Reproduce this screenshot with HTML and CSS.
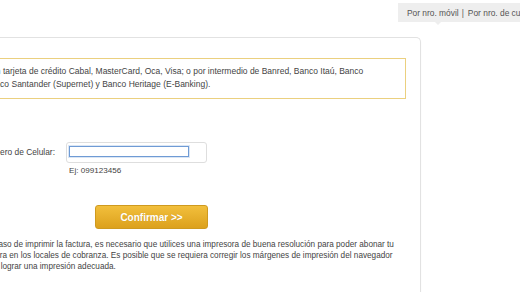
FILE: index.html
```html
<!DOCTYPE html>
<html lang="es">
<head>
<meta charset="utf-8">
<title>Pago de factura</title>
<link rel="stylesheet" href="styles.css">
</head>
<body>
<div class="page">
  <header class="topbar">
    <nav class="tabs">
      <a class="tab active" href="#">Por nro. móvil</a>
      <span class="sep">|</span>
      <a class="tab" href="#">Por nro. de cuenta</a>
    </nav>
  </header>
  <main class="card">
    <div class="notice">Con tarjeta de crédito Cabal, MasterCard, Oca, Visa; o por intermedio de Banred, Banco Itaú, Banco<br>Banco Santander (Supernet) y Banco Heritage (E-Banking).</div>
    <form class="form">
      <label class="label" for="cel">Número de Celular:</label>
      <div class="field">
        <div class="field-box"><input id="cel" class="input" type="text"></div>
        <div class="hint">Ej: 099123456</div>
      </div>
      <div class="actions"><button class="btn" type="button">Confirmar &gt;&gt;</button></div>
    </form>
    <p class="note">En caso de imprimir la factura, es necesario que utilices una impresora de buena resolución para poder abonar tu factura en los locales de cobranza. Es posible que se requiera corregir los márgenes de impresión del navegador para lograr una impresión adecuada.</p>
  </main>
</div>
</body>
</html>
```
FILE: styles.css
```css
html, body {
  margin: 0;
  height: 100%;
  overflow: hidden;
  background: #fff;
}
body {
  font-family: "Liberation Sans", Arial, sans-serif;
  font-size: 8.4px;
  color: #444;
}
.page {
  margin-left: -40px;
  width: 620px;
}
.topbar {
  display: flex;
  align-items: flex-start;
  height: 37px;
  box-sizing: border-box;
  padding: 3px 0 0 438px;
}
.tabs {
  display: flex;
  align-items: center;
  flex: none;
  height: 19px;
  padding: 0 9px;
  background: #eee;
  white-space: nowrap;
  color: #555;
}
.tab {
  position: relative;
  color: #555;
  text-decoration: none;
}
.tab.active::after {
  content: "";
  position: absolute;
  left: 28px;
  top: 100%;
  margin-top: 4px;
  border: 3px solid transparent;
  border-top-color: #eee;
  border-bottom: 0;
}
.sep {
  margin: 0 4px 0 3px;
}
.card {
  width: 461px;
  min-height: 270px;
  box-sizing: border-box;
  padding: 20px 14px 0;
  border: 1px solid #e2e2e2;
  border-bottom: 0;
  border-radius: 5px 5px 0 0;
  box-shadow: 0 1px 2px rgba(0, 0, 0, 0.04);
  background: #fff;
}
.notice {
  border: 1px solid #ebd07f;
  padding: 6px 9px 7px;
  font-size: 8.5px;
  line-height: 13px;
}
.form {
  display: grid;
  grid-template-columns: 80px 141px;
  column-gap: 11px;
  align-items: start;
  margin: 43px 0 0;
}
.label {
  text-align: right;
  line-height: 21px;
}
.field-box {
  height: 21px;
  box-sizing: border-box;
  padding: 3px 0 0 2px;
  border: 1px solid #dedede;
  border-radius: 3px;
}
.input {
  display: block;
  width: 120px;
  height: 11px;
  box-sizing: border-box;
  margin: 0;
  padding: 0;
  border: 1px solid #6f9bd5;
  box-shadow: 0 0 0 1px rgba(111, 155, 213, 0.25);
  background: #fff;
  outline: none;
}
.hint {
  margin: 2px 0 0 3px;
  font-size: 8.1px;
  line-height: 11px;
}
.actions {
  grid-column: 2;
  display: flex;
  justify-content: flex-end;
  margin: 29px -1px 0 0;
}
.btn {
  width: 113px;
  height: 24px;
  padding: 0;
  border: 1px solid #cf9a1f;
  border-radius: 3px;
  background: linear-gradient(#f2bf3c, #dca11d);
  color: #fff;
  font: bold 10px "Liberation Sans", Arial, sans-serif;
  text-shadow: 0 0 1px rgba(150, 100, 0, 0.3);
}
.note {
  margin: 10px 0 0 7px;
  font-size: 8.2px;
  line-height: 11px;
}
```
